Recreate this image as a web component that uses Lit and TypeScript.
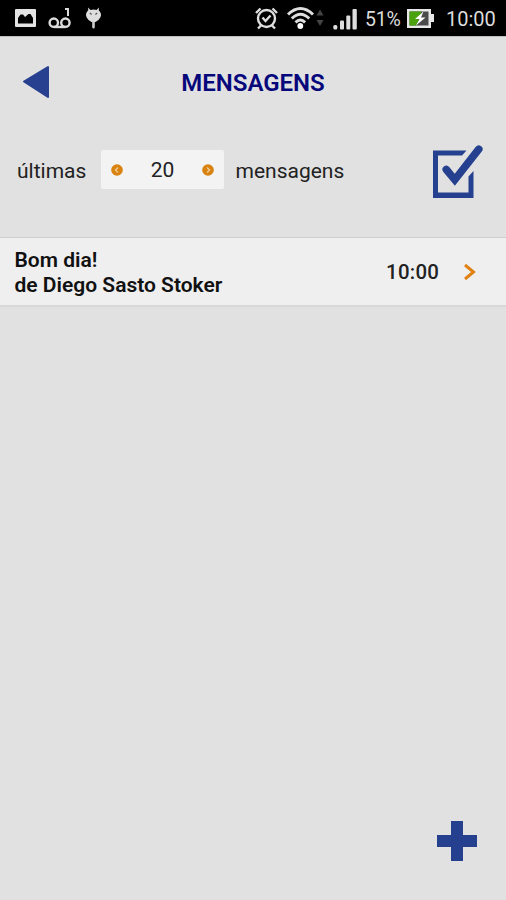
import { LitElement, html, css } from "lit";
import { customElement, property } from "lit/decorators.js";

@customElement("status-bar")
class StatusBar extends LitElement {
  static styles = css`
    :host { display: block; }
    .bar { display: flex; height: 36px; background: #000; color: #dcdcdc; font: 400 20px/38px Roboto, sans-serif; }
    svg { display: block; flex: none; }
    .right { margin-left: auto; display: flex; padding-right: 11px; }
    .pct { width: 36px; margin-left: 7px; white-space: nowrap; letter-spacing: -0.2px; font-size: 19.5px; line-height: 39px; }
    .battery { margin-left: 6px; }
    .time { margin-left: 11px; width: 49px; white-space: nowrap; }
  `;
  render() {
    return html`<div class="bar">
      <svg width="110" height="36" viewBox="0 0 110 36">
        <rect x="15" y="9" width="21" height="18" rx="1" fill="#e4e4e4"/>
        <path fill="#000" d="M18 23.500V18l2.500-3.500h2.500l2 2.500 3.500-3h2l2.500 4v5.500z"/>
        <g fill="none" stroke="#dcdcdc" stroke-width="2.400"><circle cx="53.800" cy="22.700" r="4.200"/><circle cx="65.400" cy="22.700" r="4.200"/><path d="M54 27h11.500"/><path d="M65 9h3v7" stroke-width="2"/></g>
        <path fill="#dedede" d="M88 7.500l2.500 2.500q3-.8 6 0L99 7.500l-.3 2.800q3.600 3.200 1.600 7.200-1.800 3.500-4.800 4.500h-4q-3-1-4.800-4.500-2-4 1.600-7.200z"/>
        <path fill="#cfcfcf" d="M92.200 21.500h2.600V27q-.1 1.500-1.300 1.500T92.200 27z"/>
        <path stroke="#555" stroke-width="1.200" d="M89.800 13l1.800 1.500m5.600-1.500L95.400 14.500" fill="none"/>
      </svg>
      <div class="right">
        <svg width="105" height="36" viewBox="253 0 105 36">
          <g fill="none" stroke="#dedede" stroke-width="2.400">
            <circle cx="266.500" cy="18.500" r="8.500"/><path d="M262.500 17.500l3 3.500 5-5.500M256 13l4.500-4.500M272.500 8.500L277 13M261 25.500l-3 3M272 25.500l3 3"/>
            <path stroke-width="3" d="M288 14.500q12.500-12 25 0M291.800 18.500q8.700-8.500 17.400 0M295.500 22.300q4.800-4.600 9.600 0"/>
          </g>
          <circle cx="300.300" cy="26" r="2.900" fill="#fff"/>
          <path fill="#444" d="M316.500 15.500l3.500-6 3.500 6zM316.500 20h7l-3.500 6z"/>
          <g fill="#dedede"><rect x="333.300" y="25" width="4" height="4.500" rx="1.500"/><rect x="340" y="20.500" width="4" height="9" rx="1"/><rect x="346.300" y="15.500" width="4" height="14" rx="1"/><rect x="352.500" y="9" width="4.300" height="20.500" rx="1"/></g>
        </svg>
        <span class="pct">51%</span>
        <svg class="battery" width="28" height="36" viewBox="0 0 28 36">
          <path fill="#e8e8e8" d="M0 9h24v5h3v8h-3v6H0z"/><path fill="#4a4a4a" d="M2.500 11.500h19v14h-19z"/><path fill="#4ba20f" d="M2.500 11.500h12l-5 14h-7z"/>
          <path fill="#fff" d="M16.500 11.500l-8.500 7.500h4.500L9 25.500l9.500-8H14z"/>
        </svg>
        <span class="time">10:00</span>
      </div>
    </div>`;
  }
}

@customElement("message-row")
class MessageRow extends LitElement {
  @property() subject = "";
  @property() sender = "";
  @property() time = "";
  static styles = css`
    :host { display: block; }
    .row { box-sizing: border-box; display: flex; align-items: center; height: 70px; background: #efefef; border-top: 1px solid #cfcfcf; border-bottom: 2px solid #d8d8d8; padding: 0 29px 0 14.500px; color: #111; font: 500 20.400px/25px Roboto, sans-serif; }
    .text { flex: 1; padding-top: 3px; font-size: 21px; font-weight: 600; white-space: nowrap; }
    .time { width: 53px; letter-spacing: 0.300px; padding-top: 1px; color: #222; }
    svg { display: block; margin-left: 24px; }
  `;
  render() {
    return html`<div class="row">
      <div class="text"><div>${this.subject}</div><div>${this.sender}</div></div>
      <span class="time">${this.time}</span>
      <svg width="14" height="18" viewBox="0 0 14 18"><path d="M2 2l8.500 7L2 16" fill="none" stroke="#e08212" stroke-width="3"/></svg>
    </div>`;
  }
}

@customElement("app-root")
class AppRoot extends LitElement {
  static styles = css`
    :host { display: block; }
    .screen { height: 900px; display: flex; flex-direction: column; background: #e1e1e1; font-family: Roboto, sans-serif; overflow: hidden; }
    svg { display: block; flex: none; }
    .head { display: grid; grid-template-columns: 60px 1fr 60px; align-items: center; height: 92px; border-top: 1px solid #bdbdbd; box-sizing: border-box; }
    .back { margin: -2px 0 0 22px; }
    .title { text-align: center; color: #07077c; font-size: 24px; font-weight: 600; line-height: 28px; padding-top: 1px; }
    .filter { display: flex; align-items: center; height: 109px; padding: 0 22px 0 17px; box-sizing: border-box; font-size: 21px; color: #222; }
    .filter-text { display: flex; align-items: center; height: 40px; margin-top: -27px; }
    .last { width: 84px; padding-top: 3px; }
    .stepper { display: flex; align-items: center; justify-content: space-between; box-sizing: border-box; width: 123px; height: 39px; padding: 1px 10px 0; background: #f3f3f3; border-radius: 2px; }
    .unit { margin-left: 11.500px; padding-top: 3px; }
    .check { margin: -22px 0 0 auto; }
    .add { margin: auto 29px 39px auto; }
  `;
  render() {
    return html`<div class="screen">
      <status-bar></status-bar>
      <div class="head">
        <svg class="back" width="28" height="36" viewBox="0 0 28 36"><path d="M2 17.500L26 3v30z" fill="#27408f" stroke="#27408f" stroke-width="2" stroke-linejoin="round"/></svg>
        <div class="title">MENSAGENS</div>
      </div>
      <div class="filter">
        <div class="filter-text">
          <span class="last">últimas</span>
          <div class="stepper">
            <svg width="12" height="12" viewBox="0 0 12 12"><circle cx="6" cy="6" r="5.800" fill="#d8820f"/><path d="M7 3.500L4.500 6 7 8.500" fill="none" stroke="#f0c88c" stroke-width="1.500"/></svg>
            <span>20</span>
            <svg width="12" height="12" viewBox="0 0 12 12"><circle cx="6" cy="6" r="5.800" fill="#d8820f"/><path d="M5 3.500L7.500 6 5 8.500" fill="none" stroke="#f0c88c" stroke-width="1.500"/></svg>
          </div>
          <span class="unit">mensagens</span>
        </div>
        <svg class="check" width="52" height="54" viewBox="432 145 52 54">
          <path d="M466.500 150.500H433V198h40.500V171l-5 5.500v16h-30.500V155.500h24z" fill="#24408e"/>
          <path d="M446.300 169.500l8.500 10.300 24-30.600" fill="none" stroke="#24408e" stroke-width="7.600" stroke-linecap="round" stroke-linejoin="miter"/>
        </svg>
      </div>
      <message-row subject="Bom dia!" sender="de Diego Sasto Stoker" time="10:00"></message-row>
      <svg class="add" width="40" height="40" viewBox="0 0 40 40"><path d="M14 0h12v14h14v12H26v14H14V26H0V14h14z" fill="#24408e"/></svg>
    </div>`;
  }
}
